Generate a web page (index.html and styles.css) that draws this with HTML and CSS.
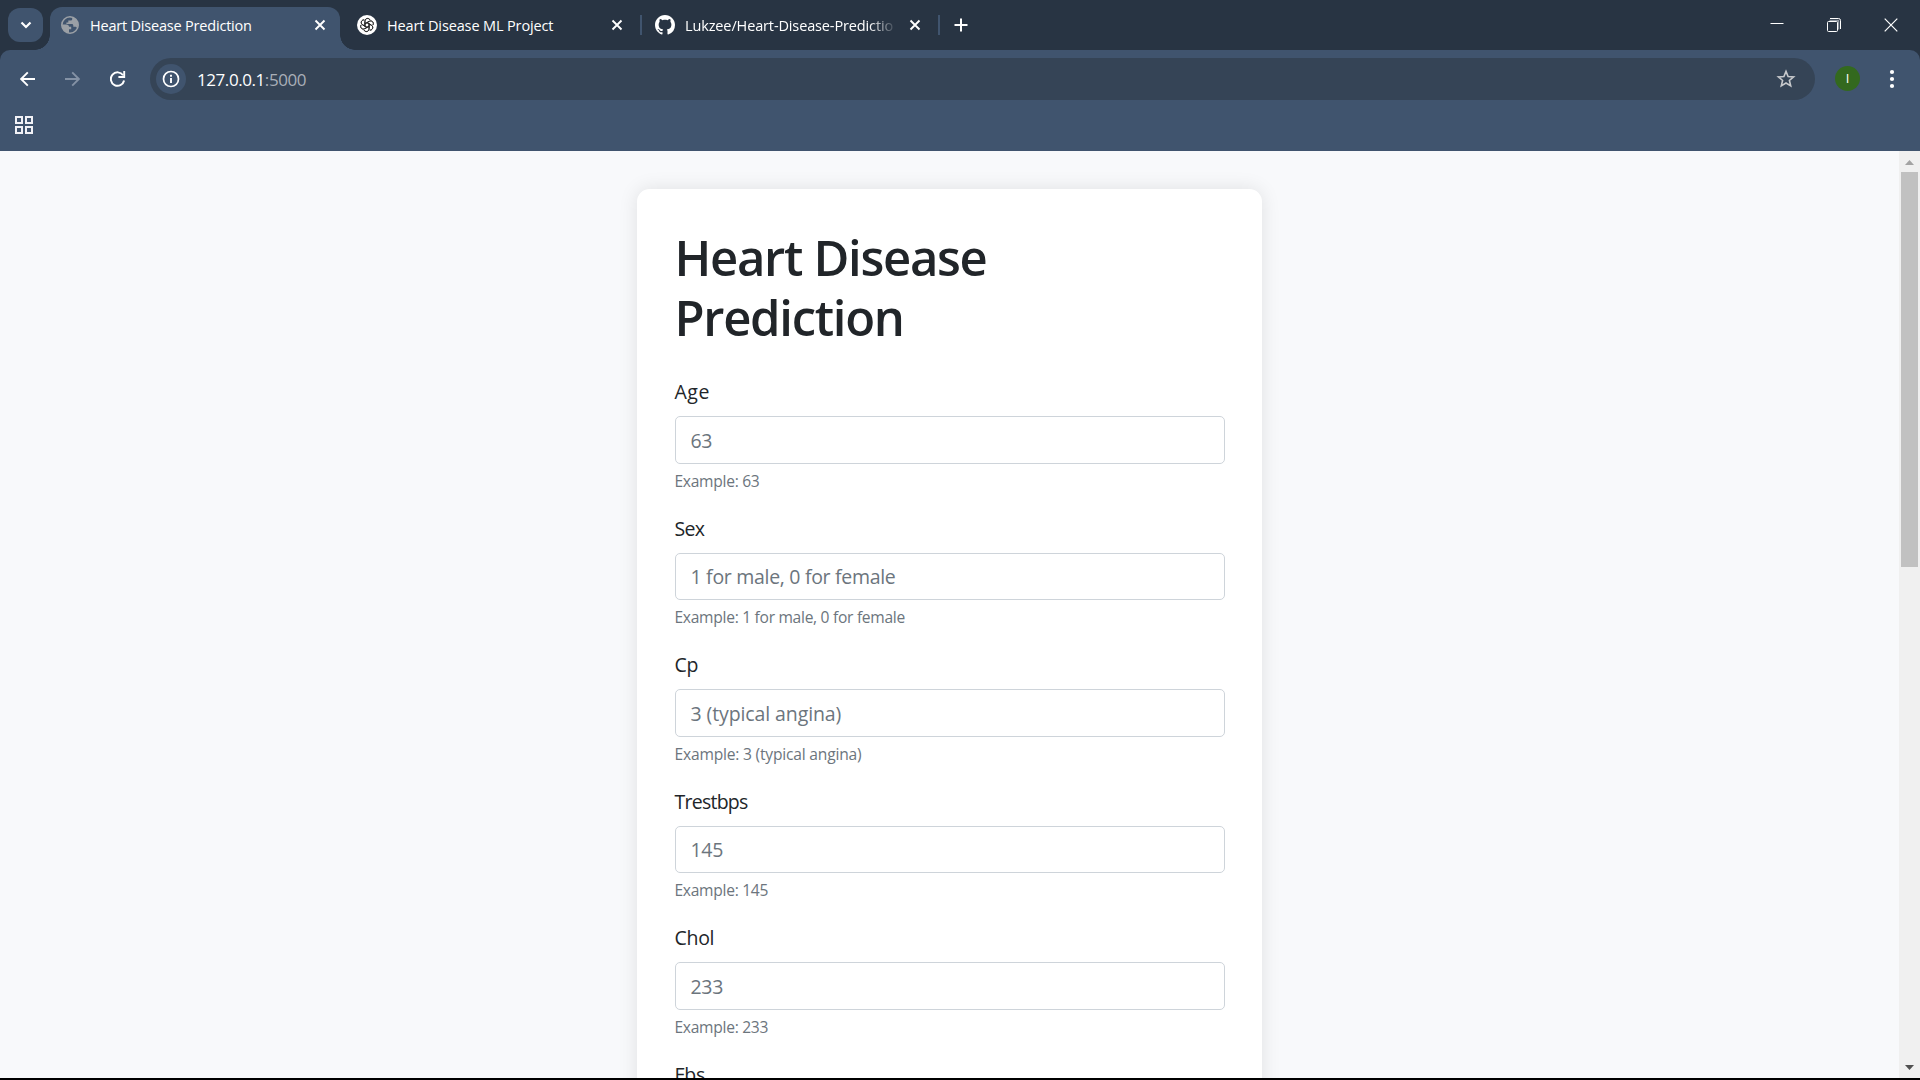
FILE: index.html
```html
<!DOCTYPE html>
<html lang="en">
<head>
<meta charset="utf-8">
<title>Heart Disease Prediction</title>
<link rel="stylesheet" href="styles.css">
</head>
<body>
<div class="browser">
  <div class="tabstrip">
    <div class="tab-search"><svg width="12" height="8" viewBox="0 0 12 8"><path d="M1.500 1.500L6 6l4.500-4.500" fill="none" stroke="#fff" stroke-width="2.200"/></svg></div>
    <div class="tab active">
      <svg class="favicon" width="18" height="18" viewBox="0 0 18 18"><circle cx="9" cy="9" r="8.200" fill="#40546e" stroke="#9ba0a6" stroke-width="1.600"/><path d="M1 8.500h4.500c1.500 0 2.500 1 2.500 2.200h2.200v2.600H8v3.800C3.500 16.500.8 13 1 8.500zM8 1.200l3.200.3v1.700c0 .8-.8 1.400-1.700 1.400H7.300v1.800H5.400v1.700h5.500c.8 0 1.400.7 1.400 1.400v1.300h1.800c.9 0 1.600.5 1.800 1.200C18.500 8 16.500 2.500 11.500 1z" fill="#9ba0a6"/></svg>
      <span class="tab-title t1">Heart Disease Prediction</span>
      <svg class="close" width="12" height="12" viewBox="0 0 12 12"><path d="M1.500 1.500l9 9m0-9l-9 9" stroke="#fff" stroke-width="1.900"/></svg>
    </div>
    <div class="tab">
      <svg class="favicon wide" width="20" height="20" viewBox="0 0 20 20"><circle cx="10" cy="10" r="10" fill="#fff"/><g fill="none" stroke="#222" stroke-width=".8"><path id="petal" d="M7.900 11.200V6.300c0-3.300 4.300-3.700 5.200-1.100M8.300 8.700l4-2.300c2.900-1.600 5.200 1.500 3.500 3.700M10 7.600l4 2.300"/><use href="#petal" transform="rotate(60 10 10)"/><use href="#petal" transform="rotate(120 10 10)"/><use href="#petal" transform="rotate(180 10 10)"/><use href="#petal" transform="rotate(240 10 10)"/><use href="#petal" transform="rotate(300 10 10)"/></g></svg>
      <span class="tab-title t2">Heart Disease ML Project</span>
      <svg class="close" width="12" height="12" viewBox="0 0 12 12"><path d="M1.500 1.500l9 9m0-9l-9 9" stroke="#fff" stroke-width="1.900"/></svg>
    </div>
    <div class="divider"></div>
    <div class="tab last">
      <svg class="favicon wide" width="20" height="20" viewBox="0 0 16 16"><path fill="#fff" d="M8 0C3.580 0 0 3.580 0 8c0 3.540 2.290 6.530 5.470 7.590.4.070.55-.17.55-.38 0-.19-.01-.82-.01-1.490-2.010.37-2.530-.49-2.690-.94-.09-.23-.48-.94-.82-1.130-.28-.15-.68-.52-.01-.53.63-.01 1.080.58 1.230.82.72 1.210 1.870.87 2.330.66.070-.52.28-.87.51-1.070-1.780-.2-3.640-.89-3.640-3.950 0-.87.31-1.590.82-2.150-.08-.2-.36-1.020.08-2.120 0 0 .67-.21 2.200.82.64-.18 1.320-.27 2-.27s1.360.09 2 .27c1.530-1.040 2.200-.82 2.200-.82.44 1.100.16 1.920.08 2.120.51.56.82 1.270.82 2.150 0 3.070-1.870 3.750-3.650 3.950.29.25.54.73.54 1.480 0 1.070-.01 1.930-.01 2.200 0 .21.15.46.55.38A8.010 8.010 0 0 0 16 8c0-4.420-3.580-8-8-8z"/></svg>
      <span class="tab-title t3">Lukzee/Heart-Disease-Predictio</span>
      <svg class="close" width="12" height="12" viewBox="0 0 12 12"><path d="M1.500 1.500l9 9m0-9l-9 9" stroke="#fff" stroke-width="1.900"/></svg>
    </div>
    <div class="divider"></div>
    <svg class="new-tab" width="14" height="14" viewBox="0 0 14 14"><path d="M7 .5v13M.5 7h13" stroke="#fff" stroke-width="2"/></svg>
    <div class="window-buttons">
      <svg width="14" height="14" viewBox="0 0 14 14"><path d="M.5 5.500h13" stroke="#fff"/></svg>
      <svg width="14" height="14" viewBox="0 0 14 14"><path d="M3 .5h8.500a2 2 0 0 1 2 2V11" fill="none" stroke="#fff"/><path d="M2.500 2.500h9v9" fill="none" stroke="#8d959f" stroke-width="1.500"/><rect x=".5" y="3.500" width="10" height="10" rx="1" fill="none" stroke="#fff"/></svg>
      <svg width="14" height="14" viewBox="0 0 14 14"><path d="M.7.7l12.600 12.600m0-12.600L.7 13.300" stroke="#fff" stroke-width="1.200"/></svg>
    </div>
  </div>
  <div class="toolbar">
    <div class="nav-row">
      <svg class="nav" width="16" height="16" viewBox="0 0 16 16"><path d="M15 8H1.300M7.800 1.300L1.100 8l6.700 6.700" fill="none" stroke="#fff" stroke-width="1.900"/></svg>
      <svg class="nav" width="16" height="16" viewBox="0 0 16 16"><path d="M0 8h13.700M7.200 1.300L13.900 8l-6.700 6.700" fill="none" stroke="#8492a5" stroke-width="1.900"/></svg>
      <svg class="nav" width="16" height="16" viewBox="0 0 16 16"><path d="M13.100 4.300A6.700 6.700 0 1 0 14.100 9.500" fill="none" stroke="#fff" stroke-width="2"/><path d="M14.200 0v6H8.400" fill="none" stroke="#fff" stroke-width="1.900"/></svg>
      <div class="omnibox">
        <div class="info"><svg width="18" height="18" viewBox="0 0 18 18"><circle cx="9" cy="9" r="7.500" fill="none" stroke="#fff" stroke-width="1.700"/><path d="M9 8v5M9 4.800v1.900" stroke="#fff" stroke-width="1.900"/></svg></div>
        <span class="url">127.0.0.1<span class="port">:5000</span></span>
        <svg class="star" width="20" height="20" viewBox="0 0 20 20"><path d="M10 2.400l2.100 5.100 5.500.4-4.200 3.600 1.300 5.400-4.700-2.900-4.700 2.900 1.300-5.400-4.200-3.600 5.500-.4z" fill="none" stroke="#c7c9cc" stroke-width="1.600"/></svg>
      </div>
      <div class="avatar">I</div>
      <svg class="menu" width="6" height="20" viewBox="0 0 6 20"><circle cx="3" cy="3" r="2.100" fill="#fff"/><circle cx="3" cy="10" r="2.100" fill="#fff"/><circle cx="3" cy="17" r="2.100" fill="#fff"/></svg>
    </div>
    <svg class="apps" width="18" height="18" viewBox="0 0 18 18"><g fill="none" stroke="#f1f1f6" stroke-width="2"><rect x="1" y="1" width="6" height="6"/><rect x="11" y="1" width="6" height="6"/><rect x="1" y="11" width="6" height="6"/><rect x="11" y="11" width="6" height="6"/></g></svg>
  </div>
  <div class="viewport">
    <main class="page">
      <div class="card">
        <h1>Heart Disease Prediction</h1>
        <div class="field age"><label>Age</label><input type="text" placeholder="63"><small>Example: 63</small></div>
        <div class="field sex"><label>Sex</label><input type="text" placeholder="1 for male, 0 for female"><small>Example: 1 for male, 0 for female</small></div>
        <div class="field cp"><label>Cp</label><input type="text" placeholder="3 (typical angina)"><small>Example: 3 (typical angina)</small></div>
        <div class="field trestbps"><label>Trestbps</label><input type="text" placeholder="145"><small>Example: 145</small></div>
        <div class="field chol"><label>Chol</label><input type="text" placeholder="233"><small>Example: 233</small></div>
        <div class="field fbs"><label>Fbs</label></div>
      </div>
    </main>
    <div class="scrollbar">
      <svg width="9" height="5" viewBox="0 0 9 5"><path d="M0 5L4.500 0 9 5z" fill="#a3a3a3"/></svg>
      <div class="thumb"></div>
      <svg class="down" width="9" height="5" viewBox="0 0 9 5"><path d="M0 0l4.500 5L9 0z" fill="#505050"/></svg>
    </div>
  </div>
</div>
</body>
</html>
```
FILE: styles.css
```css
* { box-sizing: border-box; }
body {
  margin: 0;
  overflow: hidden;
  background: #000;
  font-family: "Open Sans", "Noto Sans", sans-serif;
}
svg { display: block; flex: none; }
.browser {
  display: flex;
  flex-direction: column;
  width: 1920px;
  height: 1078px;
  background: #283443;
}
.tabstrip {
  display: flex;
  align-items: center;
  height: 50px;
  padding-left: 8px;
}
.tab-search {
  display: flex;
  align-items: center;
  justify-content: center;
  width: 35px;
  height: 34px;
  border-radius: 12px;
  background: #40546e;
}
.tab {
  display: flex;
  align-items: center;
  width: 300px;
  height: 50px;
  padding: 0 17px;
  color: #fff;
  font-size: 14.500px;
}
.tab.active {
  position: relative;
  width: 290px;
  height: 43px;
  margin: 7px 0 0 7px;
  padding: 0 14px 7px 11px;
  border-radius: 12px 12px 0 0;
  background: #40546e;
}
.tab.active::before,
.tab.active::after {
  content: "";
  position: absolute;
  bottom: 0;
  width: 15px;
  height: 15px;
}
.tab.active::before {
  left: -15px;
  background: radial-gradient(circle at 0 0, transparent 14.500px, #40546e 15px);
}
.tab.active::after {
  right: -15px;
  background: radial-gradient(circle at 100% 0, transparent 14.500px, #40546e 15px);
}
.tab.last { width: 296px; padding: 0 17px 0 13px; }
.tab-title {
  flex: 1;
  margin-left: 11px;
  white-space: nowrap;
  letter-spacing: -0.130px;
}
.favicon.wide + .tab-title { margin-left: 10px; }
.t1 { letter-spacing: -0.200px; }
.t3 {
  margin-right: 14px;
  mask-image: linear-gradient(to right, #000 calc(100% - 26px), transparent calc(100% + 2px));
}
.divider { width: 2px; height: 20px; background: #40546e; }
.new-tab { margin-left: 14px; }
.window-buttons {
  display: flex;
  gap: 43px;
  margin-left: auto;
  padding-right: 22px;
}
.toolbar {
  height: 101px;
  border-radius: 10px 10px 0 0;
  background: #40546e;
}
.nav-row {
  display: flex;
  align-items: center;
  height: 58px;
  padding-left: 20px;
}
.nav { margin-right: 29px; }
.omnibox {
  display: flex;
  align-items: center;
  width: 1665px;
  height: 42px;
  margin-left: -5px;
  padding: 0 19px 0 6px;
  border-radius: 21px;
  background: #354456;
}
.info {
  display: flex;
  align-items: center;
  justify-content: center;
  width: 30px;
  height: 30px;
  border-radius: 50%;
  background: #40546e;
}
.url {
  flex: 1;
  margin-left: 11px;
  color: #fff;
  font-size: 17px;
  letter-spacing: -0.430px;
}
.port { color: #a9afb8; }
.avatar {
  width: 25px;
  height: 25px;
  margin: -1px 0 0 20px;
  border-radius: 50%;
  background: #33691e;
  color: #fff;
  font-size: 13px;
  line-height: 25px;
  text-align: center;
}
.menu { margin: -1px 0 0 29px; }
.apps { margin: 8px 0 0 15px; }
.viewport { display: flex; flex: 1; min-height: 0; }
.page {
  display: flex;
  flex: 1;
  justify-content: center;
  overflow: hidden;
  padding-top: 38px;
  background: #f8f9fb;
}
.card {
  width: 625px;
  height: 1400px;
  padding: 37.500px;
  border-radius: 12.500px;
  background: #fff;
  box-shadow: 0 0 18.750px rgba(0, 0, 0, 0.1);
  color: #212529;
}
h1 {
  height: 120px;
  margin: 0 0 29.500px;
  font-size: 49px;
  font-weight: 600;
  letter-spacing: -1.300px;
  line-height: 60px;
}
.field { height: 136.500px; font-size: 19.500px; }
label {
  display: block;
  height: 40px;
  line-height: 32px;
  letter-spacing: -0.300px;
}
.age label { letter-spacing: 0.500px; }
.sex label { letter-spacing: -0.700px; }
.trestbps label { letter-spacing: -0.750px; }
input {
  display: block;
  width: 100%;
  height: 47.500px;
  padding: 1px 15px 0;
  border: 1px solid #ced4da;
  border-radius: 5px;
  background: #fff;
  font: inherit;
  letter-spacing: -0.300px;
}
.cp input { letter-spacing: -0.100px; }
input::placeholder { color: #6c757d; }
small {
  display: block;
  margin-top: 4px;
  color: #6c757d;
  font-size: 15.600px;
  letter-spacing: -0.290px;
  line-height: 26px;
}
.cp small { letter-spacing: -0.200px; }
.scrollbar {
  display: flex;
  flex-direction: column;
  align-items: center;
  width: 21px;
  padding: 9px 0 8px;
  background: #f0f0f0;
}
.thumb { width: 17px; height: 395px; margin-top: 7px; background: #c1c1c1; }
.down { margin-top: auto; }
```
